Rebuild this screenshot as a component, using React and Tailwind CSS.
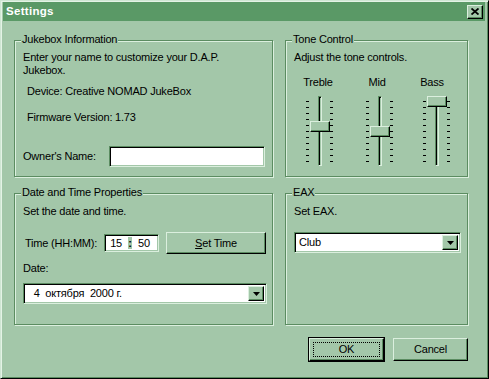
import React from 'react';

const font = "font-['Liberation_Sans',Arial,sans-serif]";

// raised 3D bevel (buttons, thumbs)
const raised =
  'bg-[#a3c7a9] border-t border-l border-r border-b border-t-[#dbefde] border-l-[#dbefde] border-r-black border-b-black shadow-[inset_-1px_-1px_0_#5b8c61]';

// sunken 3D bevel (edit fields, combos)
const sunken =
  'bg-white border-t border-l border-r border-b border-t-[#5b8c61] border-l-[#5b8c61] border-r-[#dbefde] border-b-[#dbefde] shadow-[inset_1px_1px_0_#000,inset_-1px_-1px_0_#a3c7a9]';

function Group({ title, className = '', children }) {
  return (
    <div className={`relative border border-[#5b8c61] shadow-[inset_1px_1px_0_#dbefde,1px_1px_0_#dbefde] ${className}`}>
      <span className="absolute -top-[8px] left-[6px] px-[1px] bg-[#a3c7a9] leading-[13px]">{title}</span>
      {children}
    </div>
  );
}

function Arrow() {
  return (
    <svg width="7" height="4" viewBox="0 0 7 4">
      <path d="M0 0h7L3.5 4z" fill="#000" />
    </svg>
  );
}

function Combo({ value, className = '' }) {
  return (
    <div className={`flex items-stretch p-[2px] ${sunken} ${className}`}>
      <span className="flex-1 pl-[2px] flex items-center whitespace-pre leading-[13px]">{value}</span>
      <div className={`w-[16px] flex items-center justify-center ${raised}`}>
        <Arrow />
      </div>
    </div>
  );
}

function Slider({ thumb }) {
  return (
    <div className="relative flex h-[70px]">
      <div className="flex flex-col justify-between w-[3px] pt-[5px] pb-[4px]">
        {Array.from({ length: 11 }).map((_, i) => (
          <div key={i} className="h-px bg-black" />
        ))}
      </div>
      <div className="ml-[9px] w-[4px] h-full border-l border-t border-r border-b border-l-[#5b8c61] border-t-[#5b8c61] border-r-[#dbefde] border-b-[#dbefde] shadow-[inset_1px_1px_0_#000]" />
      <div className="ml-[8px] flex flex-col justify-between w-[3px] pt-[5px] pb-[4px]">
        {Array.from({ length: 11 }).map((_, i) => (
          <div key={i} className="h-px bg-black" />
        ))}
      </div>
      <div className={`absolute left-[4px] w-[20px] h-[11px] ${raised} ${thumb}`} />
    </div>
  );
}

export default function App() {
  return (
    <div
      className={`${font} text-[11px] tracking-[-0.2px] text-black w-[489px] h-[379px] bg-[#a3c7a9] border-t border-l border-r border-b border-t-[#cfe6d3] border-l-[#cfe6d3] border-r-black border-b-black shadow-[inset_1px_1px_0_#e4f3e6,inset_-1px_-1px_0_#5b8c61] pt-[1px] pl-[2px] pr-[3px]`}
    >
      {/* Title bar */}
      <div className="h-[19px] bg-[#5a9966] flex items-center justify-between pl-[3px] pr-[2px]">
        <span className="text-white font-bold text-[11.5px] tracking-[0.3px] leading-[13px]">Settings</span>
        <div className={`w-[16px] h-[14px] flex items-center justify-center ${raised}`}>
          <svg width="8" height="7" viewBox="0 0 8 7">
            <path d="M0.5 0.5L7.5 6.5M7.5 0.5L0.5 6.5" stroke="#000" strokeWidth="1.8" />
          </svg>
        </div>
      </div>

      {/* Body */}
      <div className="pt-[19px] pl-[11px]">
        <div className="grid grid-cols-[259px_183px] grid-rows-[137px_132px] gap-x-[12px] gap-y-[16px]">
          <Group title="Jukebox Information">
            <div className="pt-[10px] pl-[8px] leading-[13px]">
              <div>
                Enter your name to customize your D.A.P.
                <br />
                Jukebox.
              </div>
              <div className="mt-[8px] pl-[4px]">Device: Creative NOMAD JukeBox</div>
              <div className="mt-[13px] pl-[4px]">Firmware Version: 1.73</div>
              <div className="mt-[22px] flex items-center">
                <span className="w-[86px]">Owner's Name:</span>
                <div className={`w-[156px] h-[21px] ${sunken}`} />
              </div>
            </div>
          </Group>

          <Group title="Tone Control">
            <div className="pt-[10px] pl-[8px] leading-[13px]">Adjust the tone controls.</div>
            <div className="mt-[12px] flex leading-[13px]">
              <span className="ml-[12px] w-[40px] text-center">Treble</span>
              <span className="ml-[19px] w-[40px] text-center">Mid</span>
              <span className="ml-[15px] w-[40px] text-center">Bass</span>
            </div>
            <div className="mt-[7px] flex pl-[20px]">
              <Slider thumb="top-[25px]" />
              <div className="ml-[33px]">
                <Slider thumb="top-[30px]" />
              </div>
              <div className="ml-[30px]">
                <Slider thumb="top-0" />
              </div>
            </div>
          </Group>

          <Group title="Date and Time Properties">
            <div className="pt-[11px] pl-[8px] leading-[13px]">
              <div>Set the date and time.</div>
              <div className="mt-[14px] flex items-center h-[22px]">
                <span className="ml-[2px] w-[79px]">Time (HH:MM):</span>
                <div className={`w-[55px] h-[18px] flex items-center ${sunken}`}>
                  <span className="w-[17px] text-right">15</span>
                  <span className="ml-[6px] w-[4px] h-[12px] bg-[#a3c7a9] flex items-center justify-center font-bold">:</span>
                  <span className="ml-[6px]">50</span>
                </div>
                <div className={`ml-[7px] w-[100px] h-[22px] flex items-center justify-center ${raised}`}>
                  <span>
                    <span className="underline">S</span>et Time
                  </span>
                </div>
              </div>
              <div className="mt-[8px]">Date:</div>
              <Combo value="  4  октября  2000 г." className="mt-[8px] w-[244px] h-[21px]" />
            </div>
          </Group>

          <Group title="EAX">
            <div className="pt-[11px] pl-[8px] leading-[13px]">
              <div>Set EAX.</div>
              <Combo value="Club" className="mt-[14px] w-[167px] h-[21px]" />
            </div>
          </Group>
        </div>

        {/* Buttons */}
        <div className="mt-[12px] w-[454px] flex justify-end gap-[8px]">
          <div className="border border-black">
            <div className={`w-[75px] h-[23px] p-[3px] ${raised}`}>
              <div className="w-full h-full border border-dotted border-black flex items-center justify-center">
                OK
              </div>
            </div>
          </div>
          <div className={`mt-[1px] w-[75px] h-[23px] flex items-center justify-center ${raised}`}>Cancel</div>
        </div>
      </div>
    </div>
  );
}
